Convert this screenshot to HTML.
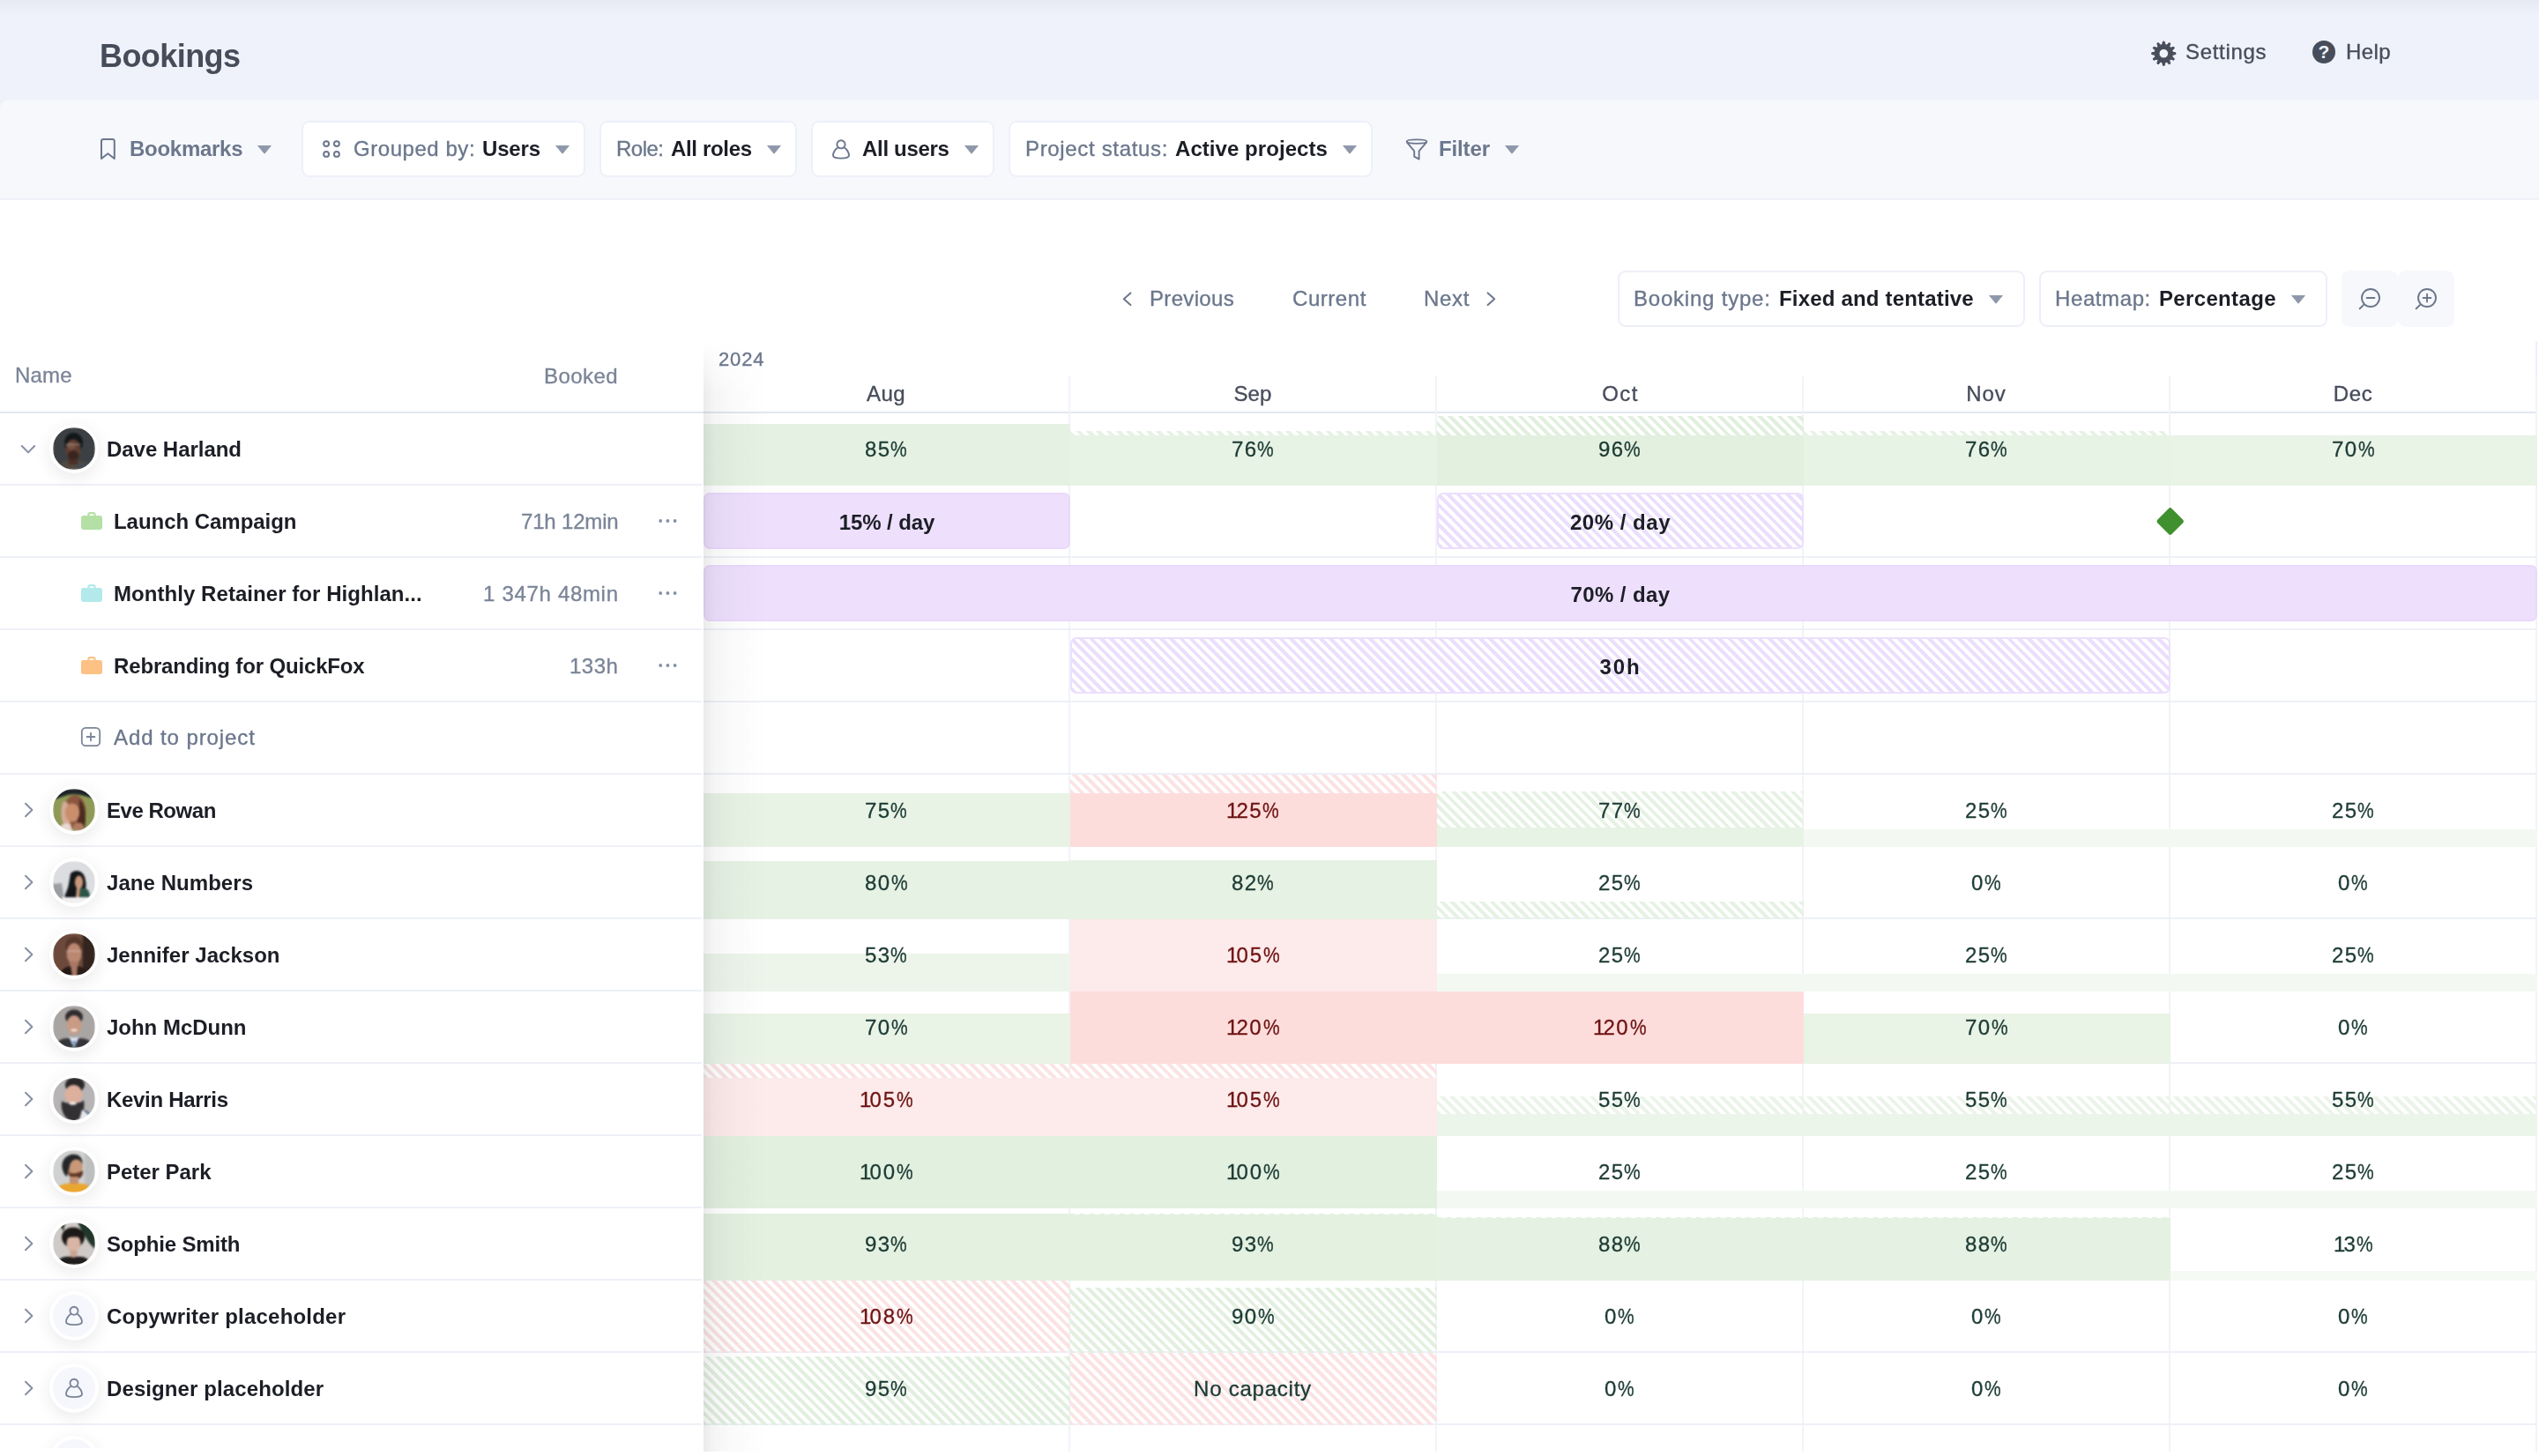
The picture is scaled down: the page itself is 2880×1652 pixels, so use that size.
<!DOCTYPE html>
<html lang="en"><head><meta charset="utf-8"><title>Bookings</title><style>
*{box-sizing:border-box;margin:0;padding:0}
html,body{width:2880px;height:1652px;overflow:hidden;background:#fff}
body{font-family:"Liberation Sans",sans-serif;position:relative;-webkit-font-smoothing:antialiased}
.abs{position:absolute;display:block}
.t{position:absolute;white-space:nowrap;will-change:transform}
.hdr{position:absolute;left:0;top:0;width:2880px;height:140px;background:#eff2fa}
.hdrshade{position:absolute;left:0;top:0;width:2880px;height:20px;background:linear-gradient(#e6e9f1,#ebeef6 45%,#eff2fa)}
.fbar{position:absolute;left:0;top:113px;width:2880px;height:114px;background:#f7f8fc;border-top-left-radius:10px;border-bottom:2px solid #eff1f8}
.fbox{position:absolute;background:#fff;border:2px solid #eef0f9;border-radius:9px}
.tbox{position:absolute;background:#fff;border:2px solid #edeff8;border-radius:9px}
.zbtn{position:absolute;width:64px;height:64px;border-radius:9px;background:#f7f8fc}
.hline{position:absolute;height:2px}
.tl{position:absolute;left:798px;top:388px;width:2080px;height:1259px;overflow:hidden}
.lp{position:absolute;left:0;top:388px;width:796px;height:1255px;overflow:hidden}
.lpclip{position:absolute;left:0;top:0;width:798px;height:1643px;overflow:hidden}
.vsep{position:absolute;width:2px;background:#f1f3f9}
.hsep{position:absolute;height:2px;background:#eef0f8}
.bar{position:absolute;height:64px;border-radius:7px;background:#eee0fd;border:2px solid #ead9fb}
.bar.hb{background-color:#fff;background-image:repeating-linear-gradient(45deg,#ecdffd 0,#ecdffd 4px,transparent 4px,transparent 8px);border:2px solid #ecdffd}
.lshadow{position:absolute;left:0;top:0;width:70px;height:1259px;background:linear-gradient(90deg,rgba(30,34,44,.09),rgba(30,34,44,.045) 18%,rgba(30,34,44,.018) 50%,rgba(30,34,44,0));-webkit-mask-image:linear-gradient(180deg,transparent 0,#000 60px);mask-image:linear-gradient(180deg,transparent 0,#000 60px)}
.av{position:absolute;width:56px;height:56px;border-radius:50%;background:#fff;box-shadow:0 5px 18px rgba(60,64,80,.11)}
</style></head><body>
<div class="hdr"></div>
<div class="hdrshade"></div>
<div class="t" style="top:45.53px;font-size:36px;line-height:36px;font-weight:700;color:#464c59;letter-spacing:-0.574px;left:113.00px;">Bookings</div>
<svg class="abs" style="left:2436px;top:43px" width="36" height="36" viewBox="0 0 36 36"><path fill-rule="evenodd" fill="#474d5b" stroke="#474d5b" stroke-width="1" stroke-linejoin="round" d="M16.65 7.63 L17.45 4.13 L19.15 4.13 L19.95 7.63 L21.91 8.16 L24.35 5.52 L25.83 6.37 L24.76 9.81 L26.19 11.24 L29.63 10.17 L30.48 11.65 L27.84 14.09 L28.37 16.05 L31.87 16.85 L31.87 18.55 L28.37 19.35 L27.84 21.31 L30.48 23.75 L29.63 25.23 L26.19 24.16 L24.76 25.59 L25.83 29.03 L24.35 29.88 L21.91 27.24 L19.95 27.77 L19.15 31.27 L17.45 31.27 L16.65 27.77 L14.69 27.24 L12.25 29.88 L10.77 29.03 L11.84 25.59 L10.41 24.16 L6.97 25.23 L6.12 23.75 L8.76 21.31 L8.23 19.35 L4.73 18.55 L4.73 16.85 L8.23 16.05 L8.76 14.09 L6.12 11.65 L6.97 10.17 L10.41 11.24 L11.84 9.81 L10.77 6.37 L12.25 5.52 L14.69 8.16 Z M13.00 17.70 a5.30 5.30 0 1 0 10.60 0 a5.30 5.30 0 1 0 -10.60 0 Z"/></svg>
<div class="t" style="top:47.48px;font-size:24px;line-height:24px;font-weight:400;color:#474d5b;letter-spacing:0.697px;-webkit-text-stroke:0.35px #474d5b;left:2479.00px;">Settings</div>
<svg class="abs" style="left:2621px;top:44px" width="30" height="30" viewBox="0 0 30 30"><circle cx="15" cy="15" r="13" fill="#474d5b"/><text x="15" y="22.4" text-anchor="middle" font-family="Liberation Sans, sans-serif" font-weight="700" font-size="21" fill="#eff2fa">?</text></svg>
<div class="t" style="top:47.48px;font-size:24px;line-height:24px;font-weight:400;color:#474d5b;letter-spacing:0.414px;-webkit-text-stroke:0.35px #474d5b;left:2660.60px;">Help</div>
<div class="fbar"></div>
<svg class="abs" style="left:112px;top:155px" width="22" height="28" viewBox="0 0 22 28"><path d="M3 5.2 Q3 3 5.2 3 H15.6 Q17.8 3 17.8 5.2 V25 L10.4 19.2 L3 25 Z" fill="none" stroke="#6b778c" stroke-width="2" stroke-linejoin="round"/></svg>
<div class="t" style="top:156.68px;font-size:24px;line-height:24px;font-weight:700;color:#6b778c;letter-spacing:-0.279px;left:146.60px;">Bookmarks</div>
<svg class="abs" style="left:292.0px;top:165.0px" width="16" height="10" viewBox="0 0 16 10"><path d="M0.6 0.3 H15.4 L8.0 9.2 Z" fill="#8f98ab" stroke="#8f98ab" stroke-width="1" stroke-linejoin="round"/></svg>
<div class="fbox" style="left:342.0px;top:137.0px;width:322.0px;height:63.5px"></div>
<svg class="abs" style="left:364px;top:157px" width="24" height="24" viewBox="0 0 24 24" fill="none" stroke="#6b778c" stroke-width="2"><circle cx="6.1" cy="6.1" r="2.95"/><circle cx="17.9" cy="6.1" r="2.95"/><circle cx="6.1" cy="17.9" r="2.95"/><circle cx="17.9" cy="17.9" r="2.95"/></svg>
<div class="t" style="top:156.68px;font-size:24px;line-height:24px;font-weight:400;color:#6b778c;letter-spacing:0.551px;-webkit-text-stroke:0.35px #6b778c;left:401.30px;">Grouped by:</div>
<div class="t" style="top:156.68px;font-size:24px;line-height:24px;font-weight:700;color:#1c1e26;letter-spacing:-0.180px;left:547.40px;">Users</div>
<svg class="abs" style="left:630.0px;top:165.0px" width="16" height="10" viewBox="0 0 16 10"><path d="M0.6 0.3 H15.4 L8.0 9.2 Z" fill="#8f98ab" stroke="#8f98ab" stroke-width="1" stroke-linejoin="round"/></svg>
<div class="fbox" style="left:679.5px;top:137.0px;width:224.5px;height:63.5px"></div>
<div class="t" style="top:156.68px;font-size:24px;line-height:24px;font-weight:400;color:#6b778c;letter-spacing:-0.508px;-webkit-text-stroke:0.35px #6b778c;left:699.00px;">Role:</div>
<div class="t" style="top:156.68px;font-size:24px;line-height:24px;font-weight:700;color:#1c1e26;letter-spacing:-0.338px;left:761.00px;">All roles</div>
<svg class="abs" style="left:870.0px;top:165.0px" width="16" height="10" viewBox="0 0 16 10"><path d="M0.6 0.3 H15.4 L8.0 9.2 Z" fill="#8f98ab" stroke="#8f98ab" stroke-width="1" stroke-linejoin="round"/></svg>
<div class="fbox" style="left:920.0px;top:137.0px;width:208.0px;height:63.5px"></div>
<svg class="abs" style="left:942px;top:157px" width="24" height="25" viewBox="0 0 24 25" stroke="#6b778c" stroke-width="1.9"><path d="M12 2.2 a4.6 4.6 0 1 1 -0.01 0 Z M8.6 10.2 C5 12.4 3 16.6 3 19.2 C3 21.6 6.4 22.6 12 22.6 C17.6 22.6 21 21.6 21 19.2 C21 16.6 19 12.4 15.4 10.2" fill="none" stroke-linecap="round" stroke-linejoin="round"/></svg>
<div class="t" style="top:156.68px;font-size:24px;line-height:24px;font-weight:700;color:#1c1e26;letter-spacing:-0.311px;left:978.40px;">All users</div>
<svg class="abs" style="left:1094.0px;top:165.0px" width="16" height="10" viewBox="0 0 16 10"><path d="M0.6 0.3 H15.4 L8.0 9.2 Z" fill="#8f98ab" stroke="#8f98ab" stroke-width="1" stroke-linejoin="round"/></svg>
<div class="fbox" style="left:1144.0px;top:137.0px;width:412.5px;height:63.5px"></div>
<div class="t" style="top:156.68px;font-size:24px;line-height:24px;font-weight:400;color:#6b778c;letter-spacing:0.660px;-webkit-text-stroke:0.35px #6b778c;left:1163.40px;">Project status:</div>
<div class="t" style="top:156.68px;font-size:24px;line-height:24px;font-weight:700;color:#1c1e26;letter-spacing:0.059px;left:1333.30px;">Active projects</div>
<svg class="abs" style="left:1523.0px;top:165.0px" width="16" height="10" viewBox="0 0 16 10"><path d="M0.6 0.3 H15.4 L8.0 9.2 Z" fill="#8f98ab" stroke="#8f98ab" stroke-width="1" stroke-linejoin="round"/></svg>
<svg class="abs" style="left:1593px;top:156px" width="28" height="27" viewBox="0 0 28 27" fill="none" stroke="#6b778c" stroke-width="1.9" stroke-linejoin="round"><path d="M2.6 4.6 C2.6 1.6 25.4 1.6 25.4 4.6 C25.4 7.6 2.6 7.6 2.6 4.6 Z"/><path d="M2.8 5.4 L11.2 15.4 V21.6 L16.6 24.6 V15.4 L25.2 5.4"/></svg>
<div class="t" style="top:156.68px;font-size:24px;line-height:24px;font-weight:700;color:#6b778c;letter-spacing:-0.138px;left:1631.70px;">Filter</div>
<svg class="abs" style="left:1707.0px;top:165.0px" width="16" height="10" viewBox="0 0 16 10"><path d="M0.6 0.3 H15.4 L8.0 9.2 Z" fill="#8f98ab" stroke="#8f98ab" stroke-width="1" stroke-linejoin="round"/></svg>
<svg class="abs" style="left:1270px;top:328px" width="18" height="22" viewBox="0 0 18 22" fill="none" stroke="#6b778c" stroke-width="2" stroke-linecap="round" stroke-linejoin="round"><path d="M12.4 4.4 L4.8 11.2 L12.4 18"/></svg>
<div class="t" style="top:327.18px;font-size:24px;line-height:24px;font-weight:400;color:#6b778c;letter-spacing:0.332px;-webkit-text-stroke:0.35px #6b778c;left:1304.30px;">Previous</div>
<div class="t" style="top:327.18px;font-size:24px;line-height:24px;font-weight:400;color:#6b778c;letter-spacing:0.545px;-webkit-text-stroke:0.35px #6b778c;left:1465.70px;">Current</div>
<div class="t" style="top:327.18px;font-size:24px;line-height:24px;font-weight:400;color:#6b778c;letter-spacing:0.714px;-webkit-text-stroke:0.35px #6b778c;left:1615.20px;">Next</div>
<svg class="abs" style="left:1682px;top:328px" width="18" height="22" viewBox="0 0 18 22" fill="none" stroke="#6b778c" stroke-width="2" stroke-linecap="round" stroke-linejoin="round"><path d="M5.6 4.4 L13.2 11.2 L5.6 18"/></svg>
<div class="tbox" style="left:1835.0px;top:307.0px;width:461.5px;height:64.0px"></div>
<div class="t" style="top:327.18px;font-size:24px;line-height:24px;font-weight:400;color:#6b778c;letter-spacing:0.789px;-webkit-text-stroke:0.35px #6b778c;left:1853.30px;">Booking type:</div>
<div class="t" style="top:327.18px;font-size:24px;line-height:24px;font-weight:700;color:#1c1e26;letter-spacing:0.184px;left:2017.80px;">Fixed and tentative</div>
<svg class="abs" style="left:2255.5px;top:335.0px" width="16" height="10" viewBox="0 0 16 10"><path d="M0.6 0.3 H15.4 L8.0 9.2 Z" fill="#8f98ab" stroke="#8f98ab" stroke-width="1" stroke-linejoin="round"/></svg>
<div class="tbox" style="left:2313.0px;top:307.0px;width:327.0px;height:64.0px"></div>
<div class="t" style="top:327.18px;font-size:24px;line-height:24px;font-weight:400;color:#6b778c;letter-spacing:0.605px;-webkit-text-stroke:0.35px #6b778c;left:2331.00px;">Heatmap:</div>
<div class="t" style="top:327.18px;font-size:24px;line-height:24px;font-weight:700;color:#1c1e26;letter-spacing:0.344px;left:2448.90px;">Percentage</div>
<svg class="abs" style="left:2598.5px;top:335.0px" width="16" height="10" viewBox="0 0 16 10"><path d="M0.6 0.3 H15.4 L8.0 9.2 Z" fill="#8f98ab" stroke="#8f98ab" stroke-width="1" stroke-linejoin="round"/></svg>
<div class="zbtn" style="left:2656px;top:307px"></div>
<div class="zbtn" style="left:2720px;top:307px"></div>
<svg class="abs" style="left:2672px;top:324px" width="30" height="30" viewBox="0 0 30 30" fill="none" stroke="#6b778c" stroke-width="1.9" stroke-linecap="round"><circle cx="17" cy="14" r="10"/><path d="M9.4 21.6 L4.6 26.2"/><path d="M12.6 14 H21.4"/></svg>
<svg class="abs" style="left:2736px;top:324px" width="30" height="30" viewBox="0 0 30 30" fill="none" stroke="#6b778c" stroke-width="1.9" stroke-linecap="round"><circle cx="17" cy="14" r="10"/><path d="M9.4 21.6 L4.6 26.2"/><path d="M12.6 14 H21.4"/><path d="M17 9.6 V18.4"/></svg>
<div class="t" style="top:414.48px;font-size:24px;line-height:24px;font-weight:400;color:#7b8598;letter-spacing:0.156px;-webkit-text-stroke:0.35px #7b8598;left:17.00px;">Name</div>
<div class="t" style="top:414.78px;font-size:24px;line-height:24px;font-weight:400;color:#7b8598;letter-spacing:0.439px;-webkit-text-stroke:0.35px #7b8598;left:617.00px;">Booked</div>
<div class="hline" style="top:467px;left:0;width:2878px;background:#e2e6ef"></div>
<div class="abs" style="left:2876px;top:387px;width:2px;height:80px;background:#eef0fa"></div>
<div class="abs" style="left:2876px;top:469px;width:2px;height:1178px;background:#f8f9fd"></div>
<div class="tl">
<div class="vsep" style="left:414px;top:39px;height:1225px"></div>
<div class="vsep" style="left:830px;top:39px;height:1225px"></div>
<div class="vsep" style="left:1246px;top:39px;height:1225px"></div>
<div class="vsep" style="left:1662px;top:39px;height:1225px"></div>
<div class="vsep" style="left:2078px;top:39px;height:1225px"></div>
<div class="hsep" style="left:0;top:161px;width:2080px"></div>
<div class="hsep" style="left:0;top:243px;width:2080px"></div>
<div class="hsep" style="left:0;top:325px;width:2080px"></div>
<div class="hsep" style="left:0;top:407px;width:2080px"></div>
<div class="hsep" style="left:0;top:489px;width:2080px"></div>
<div class="hsep" style="left:0;top:571px;width:2080px"></div>
<div class="hsep" style="left:0;top:653px;width:2080px"></div>
<div class="hsep" style="left:0;top:735px;width:2080px"></div>
<div class="hsep" style="left:0;top:817px;width:2080px"></div>
<div class="hsep" style="left:0;top:899px;width:2080px"></div>
<div class="hsep" style="left:0;top:981px;width:2080px"></div>
<div class="hsep" style="left:0;top:1063px;width:2080px"></div>
<div class="hsep" style="left:0;top:1145px;width:2080px"></div>
<div class="hsep" style="left:0;top:1227px;width:2080px"></div>
<div class="hsep" style="left:0;top:1309px;width:2080px"></div>
<div class="abs" style="left:0px;top:93.3px;width:416px;height:69.7px;background:#e5f2e3"></div>
<div class="abs" style="left:416px;top:100.7px;width:416px;height:4.9px;background-image:repeating-linear-gradient(45deg,#e6f2e3 0,#e6f2e3 4px,transparent 4px,transparent 8px);"></div>
<div class="abs" style="left:416px;top:105.6px;width:416px;height:57.4px;background:#e7f3e5"></div>
<div class="abs" style="left:832px;top:84.3px;width:416px;height:21.3px;background-image:repeating-linear-gradient(45deg,#e1f0de 0,#e1f0de 4px,transparent 4px,transparent 8px);"></div>
<div class="abs" style="left:832px;top:105.6px;width:416px;height:57.4px;background:#e3f0e0"></div>
<div class="abs" style="left:1248px;top:100.7px;width:416px;height:4.9px;background-image:repeating-linear-gradient(45deg,#e6f2e3 0,#e6f2e3 4px,transparent 4px,transparent 8px);"></div>
<div class="abs" style="left:1248px;top:105.6px;width:416px;height:57.4px;background:#e7f3e5"></div>
<div class="abs" style="left:1664px;top:105.6px;width:416px;height:57.4px;background:#e9f3e6"></div>
<div class="abs" style="left:0px;top:511.5px;width:416px;height:61.5px;background:#e8f3e5"></div>
<div class="abs" style="left:416px;top:491.0px;width:416px;height:20.9px;background-image:repeating-linear-gradient(45deg,#fbe3e4 0,#fbe3e4 4px,transparent 4px,transparent 8px);"></div>
<div class="abs" style="left:416px;top:511.9px;width:416px;height:61.1px;background:#fddddc"></div>
<div class="abs" style="left:832px;top:509.9px;width:416px;height:41.0px;background-image:repeating-linear-gradient(45deg,#e6f2e3 0,#e6f2e3 4px,transparent 4px,transparent 8px);"></div>
<div class="abs" style="left:832px;top:550.9px;width:416px;height:22.1px;background:#e7f3e5"></div>
<div class="abs" style="left:1248px;top:552.5px;width:416px;height:20.5px;background:#f3f9f2"></div>
<div class="abs" style="left:1664px;top:552.5px;width:416px;height:20.5px;background:#f3f9f2"></div>
<div class="abs" style="left:0px;top:589.4px;width:416px;height:65.6px;background:#e6f2e4"></div>
<div class="abs" style="left:416px;top:587.8px;width:416px;height:67.2px;background:#e6f2e3"></div>
<div class="abs" style="left:832px;top:634.5px;width:416px;height:20.5px;background-image:repeating-linear-gradient(45deg,#e6f2e4 0,#e6f2e4 4px,transparent 4px,transparent 8px);"></div>
<div class="abs" style="left:0px;top:693.5px;width:416px;height:43.5px;background:#edf5eb"></div>
<div class="abs" style="left:416px;top:655.0px;width:416px;height:82.0px;background:#fdeaea"></div>
<div class="abs" style="left:832px;top:716.5px;width:416px;height:20.5px;background:#f3f9f2"></div>
<div class="abs" style="left:1248px;top:716.5px;width:416px;height:20.5px;background:#f3f9f2"></div>
<div class="abs" style="left:1664px;top:716.5px;width:416px;height:20.5px;background:#f3f9f2"></div>
<div class="abs" style="left:0px;top:761.6px;width:416px;height:57.4px;background:#e9f3e6"></div>
<div class="abs" style="left:416px;top:737.0px;width:416px;height:82.0px;background:#fddddc"></div>
<div class="abs" style="left:832px;top:737.0px;width:416px;height:82.0px;background:#fddddc"></div>
<div class="abs" style="left:1248px;top:761.6px;width:416px;height:57.4px;background:#e9f3e6"></div>
<div class="abs" style="left:0px;top:819.0px;width:416px;height:16.0px;background-image:repeating-linear-gradient(45deg,#fbe4e5 0,#fbe4e5 4px,transparent 4px,transparent 8px);"></div>
<div class="abs" style="left:0px;top:835.0px;width:416px;height:66.0px;background:#fdeaea"></div>
<div class="abs" style="left:416px;top:819.0px;width:416px;height:16.0px;background-image:repeating-linear-gradient(45deg,#fbe4e5 0,#fbe4e5 4px,transparent 4px,transparent 8px);"></div>
<div class="abs" style="left:416px;top:835.0px;width:416px;height:66.0px;background:#fdeaea"></div>
<div class="abs" style="left:832px;top:855.9px;width:416px;height:20.1px;background-image:repeating-linear-gradient(45deg,#ebf4e9 0,#ebf4e9 4px,transparent 4px,transparent 8px);"></div>
<div class="abs" style="left:832px;top:876.0px;width:416px;height:25.0px;background:#ecf5ea"></div>
<div class="abs" style="left:1248px;top:855.9px;width:416px;height:20.1px;background-image:repeating-linear-gradient(45deg,#ebf4e9 0,#ebf4e9 4px,transparent 4px,transparent 8px);"></div>
<div class="abs" style="left:1248px;top:876.0px;width:416px;height:25.0px;background:#ecf5ea"></div>
<div class="abs" style="left:1664px;top:855.9px;width:416px;height:20.1px;background-image:repeating-linear-gradient(45deg,#ebf4e9 0,#ebf4e9 4px,transparent 4px,transparent 8px);"></div>
<div class="abs" style="left:1664px;top:876.0px;width:416px;height:25.0px;background:#ecf5ea"></div>
<div class="abs" style="left:0px;top:901.0px;width:416px;height:82.0px;background:#e2f0df"></div>
<div class="abs" style="left:416px;top:901.0px;width:416px;height:82.0px;background:#e2f0df"></div>
<div class="abs" style="left:832px;top:962.5px;width:416px;height:20.5px;background:#f3f9f2"></div>
<div class="abs" style="left:1248px;top:962.5px;width:416px;height:20.5px;background:#f3f9f2"></div>
<div class="abs" style="left:1664px;top:962.5px;width:416px;height:20.5px;background:#f3f9f2"></div>
<div class="abs" style="left:0px;top:988.7px;width:416px;height:76.3px;background:#e4f1e1"></div>
<div class="abs" style="left:416px;top:988.7px;width:416px;height:1.2px;background-image:repeating-linear-gradient(45deg,#e2f0df 0,#e2f0df 4px,transparent 4px,transparent 8px);"></div>
<div class="abs" style="left:416px;top:990.0px;width:416px;height:75.0px;background:#e4f1e1"></div>
<div class="abs" style="left:832px;top:992.8px;width:416px;height:1.2px;background-image:repeating-linear-gradient(45deg,#e3f1e0 0,#e3f1e0 4px,transparent 4px,transparent 8px);"></div>
<div class="abs" style="left:832px;top:994.1px;width:416px;height:70.9px;background:#e5f1e2"></div>
<div class="abs" style="left:1248px;top:992.8px;width:416px;height:1.2px;background-image:repeating-linear-gradient(45deg,#e3f1e0 0,#e3f1e0 4px,transparent 4px,transparent 8px);"></div>
<div class="abs" style="left:1248px;top:994.1px;width:416px;height:70.9px;background:#e5f1e2"></div>
<div class="abs" style="left:1664px;top:1054.3px;width:416px;height:10.7px;background:#f6faf5"></div>
<div class="abs" style="left:0px;top:1065.0px;width:416px;height:82.0px;background-image:repeating-linear-gradient(45deg,#fbe3e4 0,#fbe3e4 4px,transparent 4px,transparent 8px);"></div>
<div class="abs" style="left:416px;top:1073.2px;width:416px;height:73.8px;background-image:repeating-linear-gradient(45deg,#e3f0e0 0,#e3f0e0 4px,transparent 4px,transparent 8px);"></div>
<div class="abs" style="left:0px;top:1151.1px;width:416px;height:77.9px;background-image:repeating-linear-gradient(45deg,#e2f0df 0,#e2f0df 4px,transparent 4px,transparent 8px);"></div>
<div class="abs" style="left:416px;top:1147.0px;width:416px;height:82.0px;background-image:repeating-linear-gradient(45deg,#fbe3e4 0,#fbe3e4 4px,transparent 4px,transparent 8px);"></div>
<div class="bar" style="left:0px;top:171px;width:416px"></div>
<div class="bar hb" style="left:832px;top:171px;width:416px"></div>
<div class="bar" style="left:0px;top:253px;width:2080px"></div>
<div class="bar hb" style="left:416px;top:335px;width:1248px"></div>
<div class="abs" style="left:1652.3px;top:192.3px;width:23.4px;height:23.4px;background:#41902f;border-radius:2.5px;transform:rotate(45deg)"></div>
<div class="lshadow"></div>
</div>
<div class="t" style="top:580.68px;font-size:24px;line-height:24px;font-weight:700;color:#1c1e26;letter-spacing:-0.101px;left:805.75px;width:400px;text-align:center;">15% / day</div>
<div class="t" style="top:580.68px;font-size:24px;line-height:24px;font-weight:700;color:#1c1e26;letter-spacing:0.512px;left:1637.76px;width:400px;text-align:center;">20% / day</div>
<div class="t" style="top:662.68px;font-size:24px;line-height:24px;font-weight:700;color:#1c1e26;letter-spacing:0.387px;left:1637.69px;width:400px;text-align:center;">70% / day</div>
<div class="t" style="top:744.68px;font-size:24px;line-height:24px;font-weight:700;color:#1c1e26;letter-spacing:1.820px;left:1638.41px;width:400px;text-align:center;">30h</div>
<div class="t" style="left:981.00px;top:497.98px;font-size:24px;line-height:24px;color:#1d3b35;-webkit-text-stroke:0.3px #1d3b35"><span style="letter-spacing:1.35px">8</span><span style="letter-spacing:1.35px">5</span><span style="display:inline-block;transform:scaleX(0.872);transform-origin:0 50%;margin-right:-2.74px">%</span></div>
<div class="t" style="left:1397.00px;top:497.98px;font-size:24px;line-height:24px;color:#1d3b35;-webkit-text-stroke:0.3px #1d3b35"><span style="letter-spacing:1.35px">7</span><span style="letter-spacing:1.35px">6</span><span style="display:inline-block;transform:scaleX(0.872);transform-origin:0 50%;margin-right:-2.74px">%</span></div>
<div class="t" style="left:1813.00px;top:497.98px;font-size:24px;line-height:24px;color:#1d3b35;-webkit-text-stroke:0.3px #1d3b35"><span style="letter-spacing:1.35px">9</span><span style="letter-spacing:1.35px">6</span><span style="display:inline-block;transform:scaleX(0.872);transform-origin:0 50%;margin-right:-2.74px">%</span></div>
<div class="t" style="left:2229.00px;top:497.98px;font-size:24px;line-height:24px;color:#1d3b35;-webkit-text-stroke:0.3px #1d3b35"><span style="letter-spacing:1.35px">7</span><span style="letter-spacing:1.35px">6</span><span style="display:inline-block;transform:scaleX(0.872);transform-origin:0 50%;margin-right:-2.74px">%</span></div>
<div class="t" style="left:2644.75px;top:497.98px;font-size:24px;line-height:24px;color:#1d3b35;-webkit-text-stroke:0.3px #1d3b35"><span style="letter-spacing:1.35px">7</span><span style="letter-spacing:1.85px">0</span><span style="display:inline-block;transform:scaleX(0.872);transform-origin:0 50%;margin-right:-2.74px">%</span></div>
<div class="t" style="left:981.00px;top:907.98px;font-size:24px;line-height:24px;color:#1d3b35;-webkit-text-stroke:0.3px #1d3b35"><span style="letter-spacing:1.35px">7</span><span style="letter-spacing:1.35px">5</span><span style="display:inline-block;transform:scaleX(0.872);transform-origin:0 50%;margin-right:-2.74px">%</span></div>
<div class="t" style="left:1391.20px;top:907.98px;font-size:24px;line-height:24px;color:#6e1313;-webkit-text-stroke:0.3px #6e1313"><span style="letter-spacing:-1.75px">1</span><span style="letter-spacing:1.35px">2</span><span style="letter-spacing:1.35px">5</span><span style="display:inline-block;transform:scaleX(0.872);transform-origin:0 50%;margin-right:-2.74px">%</span></div>
<div class="t" style="left:1813.00px;top:907.98px;font-size:24px;line-height:24px;color:#1d3b35;-webkit-text-stroke:0.3px #1d3b35"><span style="letter-spacing:1.35px">7</span><span style="letter-spacing:1.35px">7</span><span style="display:inline-block;transform:scaleX(0.872);transform-origin:0 50%;margin-right:-2.74px">%</span></div>
<div class="t" style="left:2229.00px;top:907.98px;font-size:24px;line-height:24px;color:#1d3b35;-webkit-text-stroke:0.3px #1d3b35"><span style="letter-spacing:1.35px">2</span><span style="letter-spacing:1.35px">5</span><span style="display:inline-block;transform:scaleX(0.872);transform-origin:0 50%;margin-right:-2.74px">%</span></div>
<div class="t" style="left:2645.00px;top:907.98px;font-size:24px;line-height:24px;color:#1d3b35;-webkit-text-stroke:0.3px #1d3b35"><span style="letter-spacing:1.35px">2</span><span style="letter-spacing:1.35px">5</span><span style="display:inline-block;transform:scaleX(0.872);transform-origin:0 50%;margin-right:-2.74px">%</span></div>
<div class="t" style="left:980.75px;top:989.98px;font-size:24px;line-height:24px;color:#1d3b35;-webkit-text-stroke:0.3px #1d3b35"><span style="letter-spacing:1.35px">8</span><span style="letter-spacing:1.85px">0</span><span style="display:inline-block;transform:scaleX(0.872);transform-origin:0 50%;margin-right:-2.74px">%</span></div>
<div class="t" style="left:1397.00px;top:989.98px;font-size:24px;line-height:24px;color:#1d3b35;-webkit-text-stroke:0.3px #1d3b35"><span style="letter-spacing:1.35px">8</span><span style="letter-spacing:1.35px">2</span><span style="display:inline-block;transform:scaleX(0.872);transform-origin:0 50%;margin-right:-2.74px">%</span></div>
<div class="t" style="left:1813.00px;top:989.98px;font-size:24px;line-height:24px;color:#1d3b35;-webkit-text-stroke:0.3px #1d3b35"><span style="letter-spacing:1.35px">2</span><span style="letter-spacing:1.35px">5</span><span style="display:inline-block;transform:scaleX(0.872);transform-origin:0 50%;margin-right:-2.74px">%</span></div>
<div class="t" style="left:2236.10px;top:989.98px;font-size:24px;line-height:24px;color:#1d3b35;-webkit-text-stroke:0.3px #1d3b35"><span style="letter-spacing:1.85px">0</span><span style="display:inline-block;transform:scaleX(0.872);transform-origin:0 50%;margin-right:-2.74px">%</span></div>
<div class="t" style="left:2652.10px;top:989.98px;font-size:24px;line-height:24px;color:#1d3b35;-webkit-text-stroke:0.3px #1d3b35"><span style="letter-spacing:1.85px">0</span><span style="display:inline-block;transform:scaleX(0.872);transform-origin:0 50%;margin-right:-2.74px">%</span></div>
<div class="t" style="left:981.00px;top:1071.98px;font-size:24px;line-height:24px;color:#1d3b35;-webkit-text-stroke:0.3px #1d3b35"><span style="letter-spacing:1.35px">5</span><span style="letter-spacing:1.35px">3</span><span style="display:inline-block;transform:scaleX(0.872);transform-origin:0 50%;margin-right:-2.74px">%</span></div>
<div class="t" style="left:1390.95px;top:1071.98px;font-size:24px;line-height:24px;color:#6e1313;-webkit-text-stroke:0.3px #6e1313"><span style="letter-spacing:-1.75px">1</span><span style="letter-spacing:1.85px">0</span><span style="letter-spacing:1.35px">5</span><span style="display:inline-block;transform:scaleX(0.872);transform-origin:0 50%;margin-right:-2.74px">%</span></div>
<div class="t" style="left:1813.00px;top:1071.98px;font-size:24px;line-height:24px;color:#1d3b35;-webkit-text-stroke:0.3px #1d3b35"><span style="letter-spacing:1.35px">2</span><span style="letter-spacing:1.35px">5</span><span style="display:inline-block;transform:scaleX(0.872);transform-origin:0 50%;margin-right:-2.74px">%</span></div>
<div class="t" style="left:2229.00px;top:1071.98px;font-size:24px;line-height:24px;color:#1d3b35;-webkit-text-stroke:0.3px #1d3b35"><span style="letter-spacing:1.35px">2</span><span style="letter-spacing:1.35px">5</span><span style="display:inline-block;transform:scaleX(0.872);transform-origin:0 50%;margin-right:-2.74px">%</span></div>
<div class="t" style="left:2645.00px;top:1071.98px;font-size:24px;line-height:24px;color:#1d3b35;-webkit-text-stroke:0.3px #1d3b35"><span style="letter-spacing:1.35px">2</span><span style="letter-spacing:1.35px">5</span><span style="display:inline-block;transform:scaleX(0.872);transform-origin:0 50%;margin-right:-2.74px">%</span></div>
<div class="t" style="left:980.75px;top:1153.98px;font-size:24px;line-height:24px;color:#1d3b35;-webkit-text-stroke:0.3px #1d3b35"><span style="letter-spacing:1.35px">7</span><span style="letter-spacing:1.85px">0</span><span style="display:inline-block;transform:scaleX(0.872);transform-origin:0 50%;margin-right:-2.74px">%</span></div>
<div class="t" style="left:1390.95px;top:1153.98px;font-size:24px;line-height:24px;color:#6e1313;-webkit-text-stroke:0.3px #6e1313"><span style="letter-spacing:-1.75px">1</span><span style="letter-spacing:1.35px">2</span><span style="letter-spacing:1.85px">0</span><span style="display:inline-block;transform:scaleX(0.872);transform-origin:0 50%;margin-right:-2.74px">%</span></div>
<div class="t" style="left:1806.95px;top:1153.98px;font-size:24px;line-height:24px;color:#6e1313;-webkit-text-stroke:0.3px #6e1313"><span style="letter-spacing:-1.75px">1</span><span style="letter-spacing:1.35px">2</span><span style="letter-spacing:1.85px">0</span><span style="display:inline-block;transform:scaleX(0.872);transform-origin:0 50%;margin-right:-2.74px">%</span></div>
<div class="t" style="left:2228.75px;top:1153.98px;font-size:24px;line-height:24px;color:#1d3b35;-webkit-text-stroke:0.3px #1d3b35"><span style="letter-spacing:1.35px">7</span><span style="letter-spacing:1.85px">0</span><span style="display:inline-block;transform:scaleX(0.872);transform-origin:0 50%;margin-right:-2.74px">%</span></div>
<div class="t" style="left:2652.10px;top:1153.98px;font-size:24px;line-height:24px;color:#1d3b35;-webkit-text-stroke:0.3px #1d3b35"><span style="letter-spacing:1.85px">0</span><span style="display:inline-block;transform:scaleX(0.872);transform-origin:0 50%;margin-right:-2.74px">%</span></div>
<div class="t" style="left:974.95px;top:1235.98px;font-size:24px;line-height:24px;color:#6e1313;-webkit-text-stroke:0.3px #6e1313"><span style="letter-spacing:-1.75px">1</span><span style="letter-spacing:1.85px">0</span><span style="letter-spacing:1.35px">5</span><span style="display:inline-block;transform:scaleX(0.872);transform-origin:0 50%;margin-right:-2.74px">%</span></div>
<div class="t" style="left:1390.95px;top:1235.98px;font-size:24px;line-height:24px;color:#6e1313;-webkit-text-stroke:0.3px #6e1313"><span style="letter-spacing:-1.75px">1</span><span style="letter-spacing:1.85px">0</span><span style="letter-spacing:1.35px">5</span><span style="display:inline-block;transform:scaleX(0.872);transform-origin:0 50%;margin-right:-2.74px">%</span></div>
<div class="t" style="left:1813.00px;top:1235.98px;font-size:24px;line-height:24px;color:#1d3b35;-webkit-text-stroke:0.3px #1d3b35"><span style="letter-spacing:1.35px">5</span><span style="letter-spacing:1.35px">5</span><span style="display:inline-block;transform:scaleX(0.872);transform-origin:0 50%;margin-right:-2.74px">%</span></div>
<div class="t" style="left:2229.00px;top:1235.98px;font-size:24px;line-height:24px;color:#1d3b35;-webkit-text-stroke:0.3px #1d3b35"><span style="letter-spacing:1.35px">5</span><span style="letter-spacing:1.35px">5</span><span style="display:inline-block;transform:scaleX(0.872);transform-origin:0 50%;margin-right:-2.74px">%</span></div>
<div class="t" style="left:2645.00px;top:1235.98px;font-size:24px;line-height:24px;color:#1d3b35;-webkit-text-stroke:0.3px #1d3b35"><span style="letter-spacing:1.35px">5</span><span style="letter-spacing:1.35px">5</span><span style="display:inline-block;transform:scaleX(0.872);transform-origin:0 50%;margin-right:-2.74px">%</span></div>
<div class="t" style="left:974.70px;top:1317.98px;font-size:24px;line-height:24px;color:#1d3b35;-webkit-text-stroke:0.3px #1d3b35"><span style="letter-spacing:-1.75px">1</span><span style="letter-spacing:1.85px">0</span><span style="letter-spacing:1.85px">0</span><span style="display:inline-block;transform:scaleX(0.872);transform-origin:0 50%;margin-right:-2.74px">%</span></div>
<div class="t" style="left:1390.70px;top:1317.98px;font-size:24px;line-height:24px;color:#1d3b35;-webkit-text-stroke:0.3px #1d3b35"><span style="letter-spacing:-1.75px">1</span><span style="letter-spacing:1.85px">0</span><span style="letter-spacing:1.85px">0</span><span style="display:inline-block;transform:scaleX(0.872);transform-origin:0 50%;margin-right:-2.74px">%</span></div>
<div class="t" style="left:1813.00px;top:1317.98px;font-size:24px;line-height:24px;color:#1d3b35;-webkit-text-stroke:0.3px #1d3b35"><span style="letter-spacing:1.35px">2</span><span style="letter-spacing:1.35px">5</span><span style="display:inline-block;transform:scaleX(0.872);transform-origin:0 50%;margin-right:-2.74px">%</span></div>
<div class="t" style="left:2229.00px;top:1317.98px;font-size:24px;line-height:24px;color:#1d3b35;-webkit-text-stroke:0.3px #1d3b35"><span style="letter-spacing:1.35px">2</span><span style="letter-spacing:1.35px">5</span><span style="display:inline-block;transform:scaleX(0.872);transform-origin:0 50%;margin-right:-2.74px">%</span></div>
<div class="t" style="left:2645.00px;top:1317.98px;font-size:24px;line-height:24px;color:#1d3b35;-webkit-text-stroke:0.3px #1d3b35"><span style="letter-spacing:1.35px">2</span><span style="letter-spacing:1.35px">5</span><span style="display:inline-block;transform:scaleX(0.872);transform-origin:0 50%;margin-right:-2.74px">%</span></div>
<div class="t" style="left:981.00px;top:1399.98px;font-size:24px;line-height:24px;color:#1d3b35;-webkit-text-stroke:0.3px #1d3b35"><span style="letter-spacing:1.35px">9</span><span style="letter-spacing:1.35px">3</span><span style="display:inline-block;transform:scaleX(0.872);transform-origin:0 50%;margin-right:-2.74px">%</span></div>
<div class="t" style="left:1397.00px;top:1399.98px;font-size:24px;line-height:24px;color:#1d3b35;-webkit-text-stroke:0.3px #1d3b35"><span style="letter-spacing:1.35px">9</span><span style="letter-spacing:1.35px">3</span><span style="display:inline-block;transform:scaleX(0.872);transform-origin:0 50%;margin-right:-2.74px">%</span></div>
<div class="t" style="left:1813.00px;top:1399.98px;font-size:24px;line-height:24px;color:#1d3b35;-webkit-text-stroke:0.3px #1d3b35"><span style="letter-spacing:1.35px">8</span><span style="letter-spacing:1.35px">8</span><span style="display:inline-block;transform:scaleX(0.872);transform-origin:0 50%;margin-right:-2.74px">%</span></div>
<div class="t" style="left:2229.00px;top:1399.98px;font-size:24px;line-height:24px;color:#1d3b35;-webkit-text-stroke:0.3px #1d3b35"><span style="letter-spacing:1.35px">8</span><span style="letter-spacing:1.35px">8</span><span style="display:inline-block;transform:scaleX(0.872);transform-origin:0 50%;margin-right:-2.74px">%</span></div>
<div class="t" style="left:2646.55px;top:1399.98px;font-size:24px;line-height:24px;color:#1d3b35;-webkit-text-stroke:0.3px #1d3b35"><span style="letter-spacing:-1.75px">1</span><span style="letter-spacing:1.35px">3</span><span style="display:inline-block;transform:scaleX(0.872);transform-origin:0 50%;margin-right:-2.74px">%</span></div>
<div class="t" style="left:974.95px;top:1481.98px;font-size:24px;line-height:24px;color:#6e1313;-webkit-text-stroke:0.3px #6e1313"><span style="letter-spacing:-1.75px">1</span><span style="letter-spacing:1.85px">0</span><span style="letter-spacing:1.35px">8</span><span style="display:inline-block;transform:scaleX(0.872);transform-origin:0 50%;margin-right:-2.74px">%</span></div>
<div class="t" style="left:1396.75px;top:1481.98px;font-size:24px;line-height:24px;color:#1d3b35;-webkit-text-stroke:0.3px #1d3b35"><span style="letter-spacing:1.35px">9</span><span style="letter-spacing:1.85px">0</span><span style="display:inline-block;transform:scaleX(0.872);transform-origin:0 50%;margin-right:-2.74px">%</span></div>
<div class="t" style="left:1820.10px;top:1481.98px;font-size:24px;line-height:24px;color:#1d3b35;-webkit-text-stroke:0.3px #1d3b35"><span style="letter-spacing:1.85px">0</span><span style="display:inline-block;transform:scaleX(0.872);transform-origin:0 50%;margin-right:-2.74px">%</span></div>
<div class="t" style="left:2236.10px;top:1481.98px;font-size:24px;line-height:24px;color:#1d3b35;-webkit-text-stroke:0.3px #1d3b35"><span style="letter-spacing:1.85px">0</span><span style="display:inline-block;transform:scaleX(0.872);transform-origin:0 50%;margin-right:-2.74px">%</span></div>
<div class="t" style="left:2652.10px;top:1481.98px;font-size:24px;line-height:24px;color:#1d3b35;-webkit-text-stroke:0.3px #1d3b35"><span style="letter-spacing:1.85px">0</span><span style="display:inline-block;transform:scaleX(0.872);transform-origin:0 50%;margin-right:-2.74px">%</span></div>
<div class="t" style="left:981.00px;top:1563.98px;font-size:24px;line-height:24px;color:#1d3b35;-webkit-text-stroke:0.3px #1d3b35"><span style="letter-spacing:1.35px">9</span><span style="letter-spacing:1.35px">5</span><span style="display:inline-block;transform:scaleX(0.872);transform-origin:0 50%;margin-right:-2.74px">%</span></div>
<div class="t" style="top:1563.98px;font-size:24px;line-height:24px;font-weight:400;color:#1d3b35;letter-spacing:0.761px;-webkit-text-stroke:0.35px #1d3b35;left:1221.38px;width:400px;text-align:center;">No capacity</div>
<div class="t" style="left:1820.10px;top:1563.98px;font-size:24px;line-height:24px;color:#1d3b35;-webkit-text-stroke:0.3px #1d3b35"><span style="letter-spacing:1.85px">0</span><span style="display:inline-block;transform:scaleX(0.872);transform-origin:0 50%;margin-right:-2.74px">%</span></div>
<div class="t" style="left:2236.10px;top:1563.98px;font-size:24px;line-height:24px;color:#1d3b35;-webkit-text-stroke:0.3px #1d3b35"><span style="letter-spacing:1.85px">0</span><span style="display:inline-block;transform:scaleX(0.872);transform-origin:0 50%;margin-right:-2.74px">%</span></div>
<div class="t" style="left:2652.10px;top:1563.98px;font-size:24px;line-height:24px;color:#1d3b35;-webkit-text-stroke:0.3px #1d3b35"><span style="letter-spacing:1.85px">0</span><span style="display:inline-block;transform:scaleX(0.872);transform-origin:0 50%;margin-right:-2.74px">%</span></div>
<div class="t" style="top:396.68px;font-size:22px;line-height:22px;font-weight:400;color:#6b778c;letter-spacing:0.882px;-webkit-text-stroke:0.35px #6b778c;left:815.30px;">2024</div>
<div class="t" style="top:434.68px;font-size:24px;line-height:24px;font-weight:400;color:#474d5b;letter-spacing:0.448px;-webkit-text-stroke:0.35px #474d5b;left:805.22px;width:400px;text-align:center;">Aug</div>
<div class="t" style="top:434.68px;font-size:24px;line-height:24px;font-weight:400;color:#474d5b;letter-spacing:0.148px;-webkit-text-stroke:0.35px #474d5b;left:1221.07px;width:400px;text-align:center;">Sep</div>
<div class="t" style="top:434.68px;font-size:24px;line-height:24px;font-weight:400;color:#474d5b;letter-spacing:1.328px;-webkit-text-stroke:0.35px #474d5b;left:1637.66px;width:400px;text-align:center;">Oct</div>
<div class="t" style="top:434.68px;font-size:24px;line-height:24px;font-weight:400;color:#474d5b;letter-spacing:0.906px;-webkit-text-stroke:0.35px #474d5b;left:2053.45px;width:400px;text-align:center;">Nov</div>
<div class="t" style="top:434.68px;font-size:24px;line-height:24px;font-weight:400;color:#474d5b;letter-spacing:0.656px;-webkit-text-stroke:0.35px #474d5b;left:2469.33px;width:400px;text-align:center;">Dec</div>
<div class="lp">
<div class="hsep" style="left:0;top:161px;width:796px"></div>
<div class="hsep" style="left:0;top:243px;width:796px"></div>
<div class="hsep" style="left:0;top:325px;width:796px"></div>
<div class="hsep" style="left:0;top:407px;width:796px"></div>
<div class="hsep" style="left:0;top:489px;width:796px"></div>
<div class="hsep" style="left:0;top:571px;width:796px"></div>
<div class="hsep" style="left:0;top:653px;width:796px"></div>
<div class="hsep" style="left:0;top:735px;width:796px"></div>
<div class="hsep" style="left:0;top:817px;width:796px"></div>
<div class="hsep" style="left:0;top:899px;width:796px"></div>
<div class="hsep" style="left:0;top:981px;width:796px"></div>
<div class="hsep" style="left:0;top:1063px;width:796px"></div>
<div class="hsep" style="left:0;top:1145px;width:796px"></div>
<div class="hsep" style="left:0;top:1227px;width:796px"></div>
<div class="hsep" style="left:0;top:1309px;width:796px"></div>
</div>
<div class="lpclip">
<svg class="abs" style="left:21px;top:500.5px" width="22" height="18" viewBox="0 0 22 18" fill="none" stroke="#8690a5" stroke-width="2" stroke-linecap="round" stroke-linejoin="round"><path d="M3.8 5 L11 12.4 L18.2 5"/></svg>
<div class="t" style="top:497.98px;font-size:24px;line-height:24px;font-weight:700;color:#1c1e26;letter-spacing:-0.037px;left:121.00px;">Dave Harland</div>
<div class="av" style="left:56px;top:481.0px"><svg width="48" height="48" viewBox="0 0 48 48" style="position:absolute;left:4px;top:4px;border-radius:50%;overflow:hidden"><g style="filter:blur(0.8px)"><rect width="48" height="48" fill="#3c4044"/><ellipse cx="23.5" cy="17.5" rx="10.5" ry="11.5" fill="#14171a"/><ellipse cx="23" cy="25" rx="8.6" ry="11.5" fill="#5e3e31"/><ellipse cx="21" cy="21" rx="5" ry="4" fill="#7a5443"/><path d="M5 48 C7 39 14 36 23 38.5 C32 36 41 39 43 48 Z" fill="#51493f"/><path d="M27 41 L44 38 L44 48 L27 48 Z" fill="#454a50"/><rect x="18" y="33" width="10" height="9" fill="#4b3026"/><ellipse cx="23" cy="31.5" rx="6.3" ry="5" fill="#39251e"/><rect x="14.5" y="18.6" width="17" height="1.6" fill="#9a8a84" opacity=".7"/></g></svg></div>
<svg class="abs" style="left:24px;top:907.5px" width="18" height="22" viewBox="0 0 18 22" fill="none" stroke="#8690a5" stroke-width="2" stroke-linecap="round" stroke-linejoin="round"><path d="M5 3.8 L12.4 11 L5 18.2"/></svg>
<div class="t" style="top:907.98px;font-size:24px;line-height:24px;font-weight:700;color:#1c1e26;letter-spacing:-0.468px;left:121.00px;">Eve Rowan</div>
<div class="av" style="left:56px;top:891.0px"><svg width="48" height="48" viewBox="0 0 48 48" style="position:absolute;left:4px;top:4px;border-radius:50%;overflow:hidden"><g style="filter:blur(0.8px)"><rect width="48" height="48" fill="#8f9a56"/><path d="M0 0 H48 V11 C38 9 30 6 24 6 C16 6 8 10 0 13 Z" fill="#1e2428"/><ellipse cx="25" cy="26" rx="12.5" ry="19" fill="#8b573f"/><path d="M12 14 C8 22 9 34 13 44 L20 44 L17 16 Z" fill="#d6ab98"/><path d="M30 12 C38 18 38 36 36 44 L27 44 L30 24 Z" fill="#4d2c20"/><ellipse cx="22" cy="27" rx="8.2" ry="10.5" fill="#c98f6d"/><path d="M6 48 C8 40 14 38 20 40 L22 48 Z" fill="#ead8d4"/><ellipse cx="29" cy="43" rx="6" ry="4.5" fill="#b37c62"/></g></svg></div>
<svg class="abs" style="left:24px;top:989.5px" width="18" height="22" viewBox="0 0 18 22" fill="none" stroke="#8690a5" stroke-width="2" stroke-linecap="round" stroke-linejoin="round"><path d="M5 3.8 L12.4 11 L5 18.2"/></svg>
<div class="t" style="top:989.98px;font-size:24px;line-height:24px;font-weight:700;color:#1c1e26;letter-spacing:0.054px;left:121.00px;">Jane Numbers</div>
<div class="av" style="left:56px;top:973.0px"><svg width="48" height="48" viewBox="0 0 48 48" style="position:absolute;left:4px;top:4px;border-radius:50%;overflow:hidden"><g style="filter:blur(0.8px)"><rect width="48" height="48" fill="#dcdde0"/><path d="M0 26 L10 25 L13 46 L0 48 Z" fill="#9b9ea2"/><path d="M20 14 C26 8 36 11 37 22 C39 30 36 38 30 44 L14 44 C12 38 17 34 18 26 Z" fill="#13171a"/><ellipse cx="29.5" cy="24" rx="4.6" ry="7.5" fill="#c8977b"/><path d="M27 30 L31 29 L30 42 L26 42 Z" fill="#c99a80"/><path d="M31 31 C38 29 42 33 42 41 L31 41 Z" fill="#2b5646"/><rect x="10" y="41" width="34" height="7" fill="#f0f0f1"/></g></svg></div>
<svg class="abs" style="left:24px;top:1071.5px" width="18" height="22" viewBox="0 0 18 22" fill="none" stroke="#8690a5" stroke-width="2" stroke-linecap="round" stroke-linejoin="round"><path d="M5 3.8 L12.4 11 L5 18.2"/></svg>
<div class="t" style="top:1071.98px;font-size:24px;line-height:24px;font-weight:700;color:#1c1e26;letter-spacing:0.027px;left:121.00px;">Jennifer Jackson</div>
<div class="av" style="left:56px;top:1055.0px"><svg width="48" height="48" viewBox="0 0 48 48" style="position:absolute;left:4px;top:4px;border-radius:50%;overflow:hidden"><g style="filter:blur(0.8px)"><rect width="48" height="48" fill="#6c493b"/><rect x="34" width="14" height="48" fill="#33241f"/><ellipse cx="24" cy="14" rx="10" ry="10" fill="#56372b"/><ellipse cx="24" cy="23" rx="8.4" ry="12" fill="#ba8771"/><rect x="19" y="32" width="10" height="16" fill="#a87863"/><path d="M8 48 C9 41 14 38 20 37 L22 48 Z" fill="#231815"/><path d="M40 48 C39 41 34 38 28 37 L27 48 Z" fill="#2a1c19"/><rect x="15.5" y="19.5" width="17" height="1.4" fill="#d9c4b8" opacity=".6"/></g></svg></div>
<svg class="abs" style="left:24px;top:1153.5px" width="18" height="22" viewBox="0 0 18 22" fill="none" stroke="#8690a5" stroke-width="2" stroke-linecap="round" stroke-linejoin="round"><path d="M5 3.8 L12.4 11 L5 18.2"/></svg>
<div class="t" style="top:1153.98px;font-size:24px;line-height:24px;font-weight:700;color:#1c1e26;letter-spacing:-0.016px;left:121.00px;">John McDunn</div>
<div class="av" style="left:56px;top:1137.0px"><svg width="48" height="48" viewBox="0 0 48 48" style="position:absolute;left:4px;top:4px;border-radius:50%;overflow:hidden"><g style="filter:blur(0.8px)"><rect width="48" height="48" fill="#a9a5a3"/><ellipse cx="24" cy="13" rx="10" ry="8.5" fill="#2f2c2e"/><ellipse cx="24" cy="22" rx="8.4" ry="11" fill="#c99b85"/><path d="M2 48 C4 38 13 35 24 38 C35 35 44 38 46 48 Z" fill="#35363b"/><path d="M18 35 L24 48 L30 35 C27 37 21 37 18 35 Z" fill="#dfe6f2"/><path d="M22.5 40 L24 48 L26 40 Z" fill="#5f86c4"/><ellipse cx="24" cy="28" rx="3.6" ry="1.4" fill="#f2e6e0"/></g></svg></div>
<svg class="abs" style="left:24px;top:1235.5px" width="18" height="22" viewBox="0 0 18 22" fill="none" stroke="#8690a5" stroke-width="2" stroke-linecap="round" stroke-linejoin="round"><path d="M5 3.8 L12.4 11 L5 18.2"/></svg>
<div class="t" style="top:1235.98px;font-size:24px;line-height:24px;font-weight:700;color:#1c1e26;letter-spacing:-0.310px;left:121.00px;">Kevin Harris</div>
<div class="av" style="left:56px;top:1219.0px"><svg width="48" height="48" viewBox="0 0 48 48" style="position:absolute;left:4px;top:4px;border-radius:50%;overflow:hidden"><g style="filter:blur(0.8px)"><rect width="48" height="48" fill="#b6b4b4"/><ellipse cx="25" cy="8" rx="11" ry="9" fill="#2a2828"/><ellipse cx="23.5" cy="19" rx="10" ry="11" fill="#dcb09c"/><path d="M10 26 C14 30 32 30 35 25 C37 36 33 46 24 50 C14 48 8 38 10 26 Z" fill="#333033"/><ellipse cx="22.5" cy="29" rx="4.2" ry="1.7" fill="#f3eeee"/><path d="M33 36 L44 42 L40 48 L30 48 Z" fill="#e8e8ec"/><path d="M36 37 L42 42" stroke="#4a5f8a" stroke-width="2"/></g></svg></div>
<svg class="abs" style="left:24px;top:1317.5px" width="18" height="22" viewBox="0 0 18 22" fill="none" stroke="#8690a5" stroke-width="2" stroke-linecap="round" stroke-linejoin="round"><path d="M5 3.8 L12.4 11 L5 18.2"/></svg>
<div class="t" style="top:1317.98px;font-size:24px;line-height:24px;font-weight:700;color:#1c1e26;letter-spacing:-0.028px;left:121.00px;">Peter Park</div>
<div class="av" style="left:56px;top:1301.0px"><svg width="48" height="48" viewBox="0 0 48 48" style="position:absolute;left:4px;top:4px;border-radius:50%;overflow:hidden"><g style="filter:blur(0.8px)"><rect width="48" height="48" fill="#d0d1d1"/><rect x="36" width="12" height="48" fill="#bdbebe"/><ellipse cx="22" cy="22" rx="6.5" ry="8.5" fill="#b98868"/><path d="M11 22 C8 10 18 3 26 5 C32 6 35 12 33 18 L20 16 C18 20 17 26 16 30 C13 28 12 26 11 22 Z" fill="#26272a"/><ellipse cx="26.5" cy="19" rx="7.5" ry="8.5" fill="#c99879"/><path d="M17 24 C20 28 28 27 34 23 C35 29 31 33 26 33 C21 33 18 29 17 24 Z" fill="#5b3423"/><rect x="19" y="30" width="10" height="9" fill="#c39173"/><path d="M2 48 C5 40 13 36 24 38.5 C35 36 43 40 46 48 Z" fill="#eba62f"/></g></svg></div>
<svg class="abs" style="left:24px;top:1399.5px" width="18" height="22" viewBox="0 0 18 22" fill="none" stroke="#8690a5" stroke-width="2" stroke-linecap="round" stroke-linejoin="round"><path d="M5 3.8 L12.4 11 L5 18.2"/></svg>
<div class="t" style="top:1399.98px;font-size:24px;line-height:24px;font-weight:700;color:#1c1e26;letter-spacing:-0.168px;left:121.00px;">Sophie Smith</div>
<div class="av" style="left:56px;top:1383.0px"><svg width="48" height="48" viewBox="0 0 48 48" style="position:absolute;left:4px;top:4px;border-radius:50%;overflow:hidden"><g style="filter:blur(0.8px)"><rect width="48" height="48" fill="#cfcac8"/><path d="M28 0 H48 V30 C42 26 38 18 34 12 Z" fill="#22372b"/><path d="M6 0 L14 0 L12 10 Z" fill="#22372b"/><ellipse cx="23" cy="17" rx="13" ry="11.5" fill="#1c1919"/><ellipse cx="23.5" cy="24" rx="8" ry="10.2" fill="#d8b5a4"/><path d="M14 18 C18 12 28 12 33 18 C30 16 20 16 14 18 Z" fill="#1c1919"/><rect x="19.5" y="32" width="8" height="8" fill="#caa391"/><path d="M4 48 C6 40 14 37 23.5 40 C33 37 41 40 43 48 Z" fill="#1f1c1c"/></g></svg></div>
<svg class="abs" style="left:24px;top:1481.5px" width="18" height="22" viewBox="0 0 18 22" fill="none" stroke="#8690a5" stroke-width="2" stroke-linecap="round" stroke-linejoin="round"><path d="M5 3.8 L12.4 11 L5 18.2"/></svg>
<div class="t" style="top:1481.98px;font-size:24px;line-height:24px;font-weight:700;color:#1c1e26;letter-spacing:0.203px;left:121.00px;">Copywriter placeholder</div>
<div class="av" style="left:56px;top:1465.0px"><svg width="48" height="48" viewBox="0 0 48 48" style="position:absolute;left:4px;top:4px;border-radius:50%;overflow:hidden"><rect width="48" height="48" fill="#f6f7fd"/><g transform="translate(12,11.5)" stroke="#7b8598" stroke-width="1.9"><path d="M12 2.2 a4.6 4.6 0 1 1 -0.01 0 Z M8.6 10.2 C5 12.4 3 16.6 3 19.2 C3 21.6 6.4 22.6 12 22.6 C17.6 22.6 21 21.6 21 19.2 C21 16.6 19 12.4 15.4 10.2" fill="none" stroke-linecap="round" stroke-linejoin="round"/></g></svg></div>
<svg class="abs" style="left:24px;top:1563.5px" width="18" height="22" viewBox="0 0 18 22" fill="none" stroke="#8690a5" stroke-width="2" stroke-linecap="round" stroke-linejoin="round"><path d="M5 3.8 L12.4 11 L5 18.2"/></svg>
<div class="t" style="top:1563.98px;font-size:24px;line-height:24px;font-weight:700;color:#1c1e26;letter-spacing:0.101px;left:121.00px;">Designer placeholder</div>
<div class="av" style="left:56px;top:1547.0px"><svg width="48" height="48" viewBox="0 0 48 48" style="position:absolute;left:4px;top:4px;border-radius:50%;overflow:hidden"><rect width="48" height="48" fill="#f6f7fd"/><g transform="translate(12,11.5)" stroke="#7b8598" stroke-width="1.9"><path d="M12 2.2 a4.6 4.6 0 1 1 -0.01 0 Z M8.6 10.2 C5 12.4 3 16.6 3 19.2 C3 21.6 6.4 22.6 12 22.6 C17.6 22.6 21 21.6 21 19.2 C21 16.6 19 12.4 15.4 10.2" fill="none" stroke-linecap="round" stroke-linejoin="round"/></g></svg></div>
<div class="av" style="left:56px;top:1629.0px"><svg width="48" height="48" viewBox="0 0 48 48" style="position:absolute;left:4px;top:4px;border-radius:50%;overflow:hidden"><rect width="48" height="48" fill="#f6f7fd"/><g transform="translate(12,11.5)" stroke="#7b8598" stroke-width="1.9"><path d="M12 2.2 a4.6 4.6 0 1 1 -0.01 0 Z M8.6 10.2 C5 12.4 3 16.6 3 19.2 C3 21.6 6.4 22.6 12 22.6 C17.6 22.6 21 21.6 21 19.2 C21 16.6 19 12.4 15.4 10.2" fill="none" stroke-linecap="round" stroke-linejoin="round"/></g></svg></div>
<svg class="abs" style="left:92px;top:581.0px" width="24" height="20" viewBox="0 0 24 20"><rect x="0" y="4" width="24" height="16" rx="2.4" fill="#b4e0a6"/><path d="M8.4 4.6 V3.2 Q8.4 1.2 10.4 1.2 H13.6 Q15.6 1.2 15.6 3.2 V4.6" fill="none" stroke="#b4e0a6" stroke-width="2.2"/></svg>
<div class="t" style="top:579.98px;font-size:24px;line-height:24px;font-weight:700;color:#1c1e26;letter-spacing:-0.038px;left:128.50px;">Launch Campaign</div>
<div class="t" style="top:579.98px;font-size:24px;line-height:24px;font-weight:400;color:#7b8598;letter-spacing:-0.172px;-webkit-text-stroke:0.35px #7b8598;left:590.50px;">71h 12min</div>
<svg class="abs" style="left:745px;top:586.5px" width="26" height="8" viewBox="0 0 26 8" fill="#8690a5"><circle cx="4.2" cy="4" r="1.9"/><circle cx="12.4" cy="4" r="1.9"/><circle cx="20.6" cy="4" r="1.9"/></svg>
<svg class="abs" style="left:92px;top:663.0px" width="24" height="20" viewBox="0 0 24 20"><rect x="0" y="4" width="24" height="16" rx="2.4" fill="#b3e9ea"/><path d="M8.4 4.6 V3.2 Q8.4 1.2 10.4 1.2 H13.6 Q15.6 1.2 15.6 3.2 V4.6" fill="none" stroke="#b3e9ea" stroke-width="2.2"/></svg>
<div class="t" style="top:661.98px;font-size:24px;line-height:24px;font-weight:700;color:#1c1e26;letter-spacing:0.056px;left:128.50px;">Monthly Retainer for Highlan...</div>
<div class="t" style="top:661.98px;font-size:24px;line-height:24px;font-weight:400;color:#7b8598;letter-spacing:0.686px;-webkit-text-stroke:0.35px #7b8598;left:548.20px;">1 347h 48min</div>
<svg class="abs" style="left:745px;top:668.5px" width="26" height="8" viewBox="0 0 26 8" fill="#8690a5"><circle cx="4.2" cy="4" r="1.9"/><circle cx="12.4" cy="4" r="1.9"/><circle cx="20.6" cy="4" r="1.9"/></svg>
<svg class="abs" style="left:92px;top:745.0px" width="24" height="20" viewBox="0 0 24 20"><rect x="0" y="4" width="24" height="16" rx="2.4" fill="#fdc185"/><path d="M8.4 4.6 V3.2 Q8.4 1.2 10.4 1.2 H13.6 Q15.6 1.2 15.6 3.2 V4.6" fill="none" stroke="#fdc185" stroke-width="2.2"/></svg>
<div class="t" style="top:743.98px;font-size:24px;line-height:24px;font-weight:700;color:#1c1e26;letter-spacing:-0.151px;left:128.50px;">Rebranding for QuickFox</div>
<div class="t" style="top:743.98px;font-size:24px;line-height:24px;font-weight:400;color:#7b8598;letter-spacing:0.470px;-webkit-text-stroke:0.35px #7b8598;left:646.40px;">133h</div>
<svg class="abs" style="left:745px;top:750.5px" width="26" height="8" viewBox="0 0 26 8" fill="#8690a5"><circle cx="4.2" cy="4" r="1.9"/><circle cx="12.4" cy="4" r="1.9"/><circle cx="20.6" cy="4" r="1.9"/></svg>
<svg class="abs" style="left:90px;top:822.7px" width="26" height="26" viewBox="0 0 26 26" fill="none" stroke="#7b8598" stroke-width="1.8" stroke-linecap="round"><rect x="2.8" y="2.8" width="20.4" height="20.4" rx="4.4"/><path d="M13 8.6 V17.4 M8.6 13 H17.4"/></svg>
<div class="t" style="top:825.48px;font-size:24px;line-height:24px;font-weight:400;color:#6b778c;letter-spacing:0.908px;-webkit-text-stroke:0.35px #6b778c;left:129.20px;">Add to project</div>
</div>
</body></html>
